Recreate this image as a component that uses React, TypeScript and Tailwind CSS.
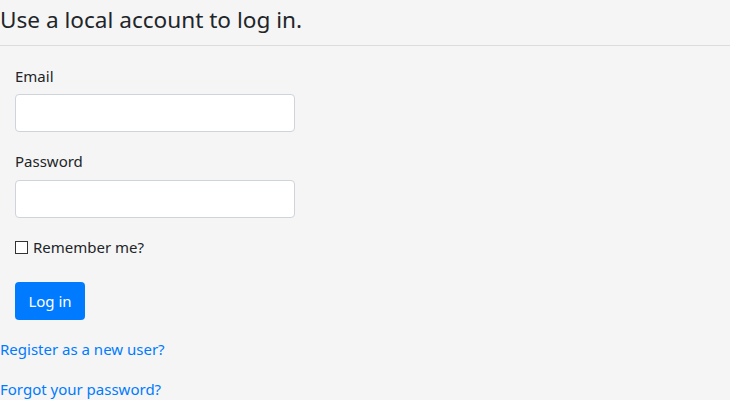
import React from "react";

export default function App() {
  return (
    <div
      className="w-[730px] h-[400px] overflow-hidden bg-[#f5f5f5] text-[#212529] text-[15px] leading-[24px]"
      style={{ fontFamily: '"Segoe UI", "Noto Sans", sans-serif' }}
    >
      <h4 className="text-[22.6px] leading-[29px] font-normal m-0 pt-[5px] pb-[11px] text-[#212529]">
        Use a local account to log in.
      </h4>
      <hr className="border-0 border-t border-[#dcdcdc] m-0" />
      <form className="pl-[15px] pt-[18px]">
        <div className="mb-[17px]">
          <label className="block mb-[6px] text-[#212529]">Email</label>
          <input
            className="block w-[280px] h-[38px] bg-white border border-[#ced4da] rounded-[4px] outline-none"
            type="email"
          />
        </div>
        <div className="mb-[17px]">
          <label className="block mb-[7px]">Password</label>
          <input
            className="block w-[280px] h-[38px] bg-white border border-[#ced4da] rounded-[4px] outline-none"
            type="password"
          />
        </div>
        <div className="mb-[23px] flex items-center h-[24px]">
          <span className="inline-block w-[13px] h-[13px] border border-[#333] bg-white mr-[5px]" />
          <span>Remember me?</span>
        </div>
        <button
          type="button"
          className="block h-[38px] w-[70px] bg-[#007bff] text-white rounded-[4px] text-[15px]"
          style={{ fontFamily: '"Segoe UI", "Noto Sans", sans-serif' }}
        >
          Log in
        </button>
      </form>
      <div className="pt-[17px]">
        <a className="block text-[#007bff] h-[24px]">Register as a new user?</a>
        <a className="block text-[#007bff] mt-[16px] h-[24px]">Forgot your password?</a>
      </div>
    </div>
  );
}
